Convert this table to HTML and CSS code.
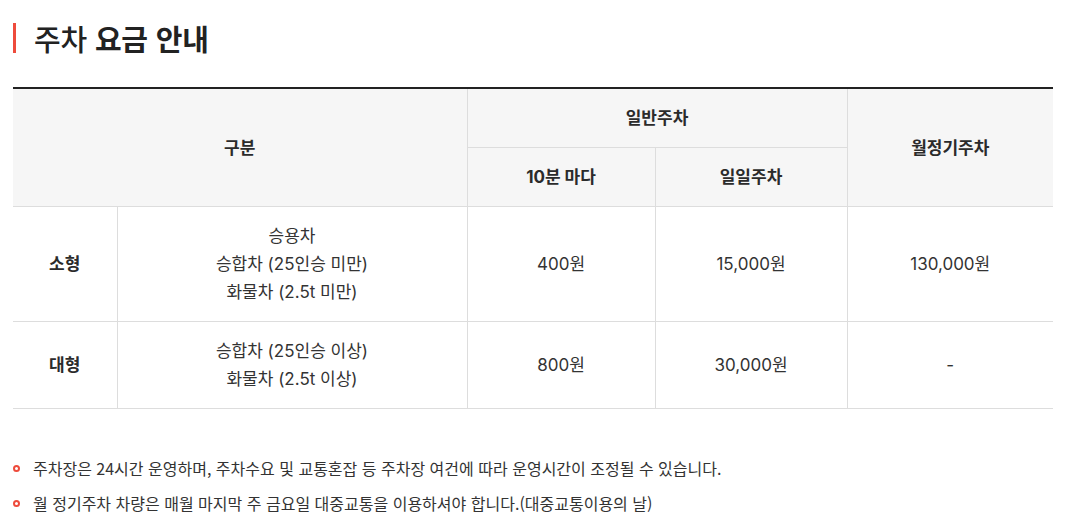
FILE: index.html
```html
<!DOCTYPE html>
<html lang="ko">
<head>
<meta charset="utf-8">
<title>주차 요금 안내</title>
<link rel="stylesheet" href="styles.css">
</head>
<body>
<div class="page">
  <h2 class="title"><span class="title-light">주차</span> 요금 안내</h2>
  <table class="fee-table">
    <colgroup>
      <col class="c1"><col class="c2"><col class="c3"><col class="c4"><col class="c5">
    </colgroup>
    <thead>
      <tr>
        <th colspan="2" rowspan="2" class="first">구분</th>
        <th colspan="2">일반주차</th>
        <th rowspan="2">월정기주차</th>
      </tr>
      <tr>
        <th>10분 마다</th>
        <th>일일주차</th>
      </tr>
    </thead>
    <tbody>
      <tr>
        <th class="first">소형</th>
        <td>승용차<br>승합차 (25인승 미만)<br>화물차 (2.5t 미만)</td>
        <td>400원</td>
        <td>15,000원</td>
        <td>130,000원</td>
      </tr>
      <tr>
        <th class="first">대형</th>
        <td>승합차 (25인승 이상)<br>화물차 (2.5t 이상)</td>
        <td>800원</td>
        <td>30,000원</td>
        <td>-</td>
      </tr>
    </tbody>
  </table>
  <ul class="notes">
    <li>주차장은 24시간 운영하며, 주차수요 및 교통혼잡 등 주차장 여건에 따라 운영시간이 조정될 수 있습니다.</li>
    <li>월 정기주차 차량은 매월 마지막 주 금요일 대중교통을 이용하셔야 합니다.(대중교통이용의 날)</li>
  </ul>
</div>
</body>
</html>
```

FILE: styles.css
```css
html, body {
  margin: 0;
  padding: 0;
  background: #fff;
}
body {
  font-family: Inter, "Noto Sans CJK KR", sans-serif;
  color: #333;
}
.page {
  width: 1040px;
  margin-left: 13px;
  padding-top: 23px;
}
.title {
  margin: 0;
  height: 30px;
  line-height: 30px;
  font-size: 29px;
  font-weight: 700;
  color: #222;
  letter-spacing: -0.2px;
  border-left: 3px solid #ee4b3c;
  padding-left: 18px;
  font-family: "Noto Sans CJK KR", sans-serif;
}
.title-light {
  font-weight: 500;
}
.fee-table {
  margin-top: 34px;
  width: 1040px;
  border-collapse: collapse;
  table-layout: fixed;
  border-top: 2px solid #222;
  font-size: 17px;
  line-height: 28px;
}
.c1 { width: 104px; }
.c2 { width: 350px; }
.c3 { width: 188px; }
.c4 { width: 192px; }
.c5 { width: 206px; }
.fee-table th,
.fee-table td {
  padding: 15px 0;
  text-align: center;
  vertical-align: middle;
  border-bottom: 1px solid #ddd;
  border-left: 1px solid #ddd;
}
.fee-table th.first {
  border-left: none;
}
.fee-table thead th {
  background: #f6f6f6;
  font-weight: 700;
  color: #2b2b2b;
}
.fee-table tbody th {
  font-weight: 700;
  color: #2b2b2b;
}
.fee-table td {
  font-weight: 400;
  color: #333;
}
.notes {
  list-style: none;
  margin: 42px 0 0;
  padding: 0;
  font-family: "Noto Sans CJK KR", sans-serif;
  font-size: 16px;
  line-height: 35px;
  color: #333;
}
.notes li {
  position: relative;
  padding-left: 20px;
}
.notes li::before {
  content: "";
  position: absolute;
  left: 0;
  top: 14px;
  width: 3px;
  height: 3px;
  border: 2px solid #ee4b3c;
  border-radius: 50%;
}
```
